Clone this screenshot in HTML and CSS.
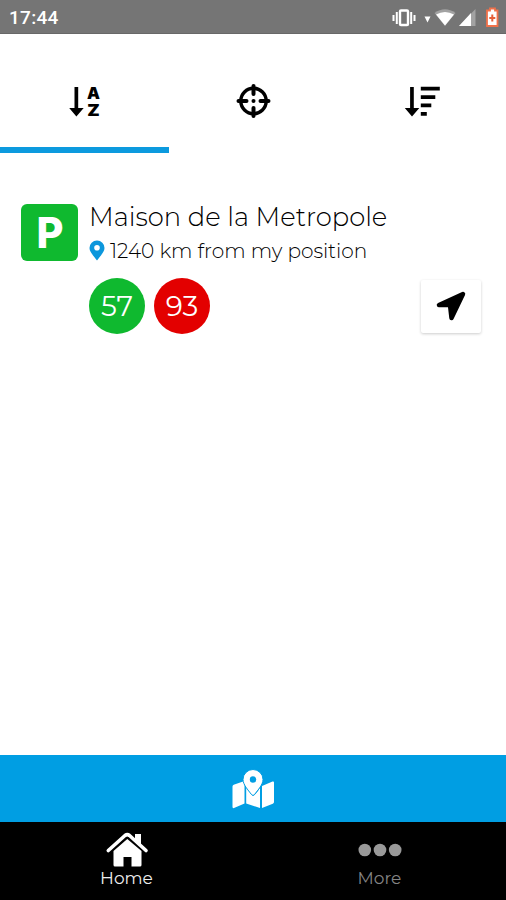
FILE: index.html
```html
<!DOCTYPE html>
<html lang="en">
<head>
<meta charset="utf-8">
<title>Parking</title>
<link rel="stylesheet" href="styles.css">
</head>
<body>
<div class="app">
  <header class="status">
    <span class="time">17:44</span>
    <svg class="status-icons" width="126" height="34" viewBox="380 0 126 34">
      <g fill="none" stroke="#fff" stroke-width="2">
        <rect x="400" y="10.500" width="8" height="14.500" rx="1" stroke-width="2.400"/>
        <path d="M396.800 12v12M411.200 12v12M393.500 15v6M414.500 15v6"/>
      </g>
      <path d="M424.500 16.500h6l-3 6z" fill="#fff"/>
      <path d="M434.500 13q10.500-7.500 21 0L445 26z" fill="#a2a2a2"/>
      <path d="M436 14.500q9-5 18 0L445 25.500z" fill="#fff"/>
      <path d="M475.500 9v17H459z" fill="#a2a2a2"/>
      <path d="M471 13v13h-12z" fill="#fff"/>
      <path d="M490 8.500h5v2h2.500v15.500h-10.500V10.500h3z" fill="#fff" stroke="#f0714a" stroke-width="1.800"/>
      <path d="M492.300 14.500v7M489.300 18h6" stroke="#e65f38" stroke-width="2"/>
    </svg>
  </header>
  <nav class="tabs">
    <div class="tab active">
      <svg width="60" height="50" viewBox="54.300 76 60 50">
        <path d="M74.800 87h3.700v21H84l-7.300 8.500L69.500 108h5.300z"/>
        <text class="sort-letter" x="93.800" y="99" textLength="13" lengthAdjust="spacingAndGlyphs">A</text>
        <text class="sort-letter" x="93.800" y="116" textLength="12.500" lengthAdjust="spacingAndGlyphs">Z</text>
      </svg>
    </div>
    <div class="tab">
      <svg width="60" height="50" viewBox="223 76 60 50">
        <circle cx="253.500" cy="101" r="12.700" fill="none" stroke="#000" stroke-width="3.400"/>
        <path d="M253.500 86v8M253.500 108v8M238.500 101h8M260.500 101h8" stroke="#000" stroke-width="4" stroke-linecap="round"/>
        <circle cx="253.500" cy="101" r="2"/>
      </svg>
    </div>
    <div class="tab">
      <svg width="60" height="50" viewBox="391.700 76 60 50">
        <path d="M409.800 87h3.700v21h5.500l-7.300 8.500-7.200-8.500h5.300z"/>
        <path d="M420.500 86.800h19v3.800h-19zM420.500 95.200H435V99h-14.500zM420.500 103.600H431v3.700h-10.500zM420.500 112h6v3.800h-6z"/>
      </svg>
    </div>
  </nav>
  <main class="list">
    <article class="place">
      <div class="badge"><svg width="57" height="57" viewBox="21 204 57 57"><text class="badge-letter" x="50" y="248" textLength="27" lengthAdjust="spacingAndGlyphs">P</text></svg></div>
      <div class="info">
        <h1 class="name">Maison de la Metropole</h1>
        <p class="distance">
          <svg width="16" height="21" viewBox="0 0 16 21"><path fill-rule="evenodd" d="M8 .5A7.400 7.400 0 0 0 .5 8c0 3.700 3.500 7.300 7.500 12.500C12 15.300 15.500 11.700 15.500 8A7.400 7.400 0 0 0 8 .5zM8 5a2.800 2.800 0 1 1 0 5.600A2.800 2.800 0 0 1 8 5z" fill="#0c97dc"/></svg>
          <span>1240 km from my position</span>
        </p>
        <div class="actions">
          <span class="count free">57</span>
          <span class="count taken">93</span>
          <button class="go" aria-label="Directions">
            <svg width="60" height="53" viewBox="420.500 280 60 53"><path d="M462.500 294 438.500 305H449.500L451 318z" stroke="#000" stroke-width="4.500" stroke-linejoin="round"/></svg>
          </button>
        </div>
      </div>
    </article>
  </main>
  <div class="map-bar">
    <svg width="60" height="60" viewBox="223.500 758.500 60 60" fill="#fff">
      <path d="M233 786q0-1.300 1.200-1.800L245 780.500V803l-10.500 4.500q-1.500.5-1.500-1zM262.500 785.500l10.500-4.500q1.500-.5 1.500 1v19.500q0 1.300-1.200 1.800l-10.800 4.200z"/>
      <path d="M246.700 786c2 4 4.500 7.500 6.800 9.500 2.500-1.500 4.500-4 7-8.500v20.500L246.700 803z"/>
      <path stroke="#009ee3" stroke-width="1" d="M253.500 769a10 10 0 0 0-10 10c0 5 5 10.500 8.500 15q1.500 2 3 0c3.500-4.500 8.500-10 8.500-15a10 10 0 0 0-10-10z"/>
      <circle cx="253.500" cy="779" r="3.200" fill="#009ee3"/>
    </svg>
  </div>
  <nav class="bottom">
    <div class="item selected">
      <svg width="50" height="39" viewBox="101.500 830 50 39" fill="#fff">
        <path d="M134.500 834h6v13l-6-6z"/>
        <path d="M107.800 850.500 124.500 835.500q2.300-1.700 4.500 0l16.500 15" fill="none" stroke="#fff" stroke-width="3.600" stroke-linecap="round" stroke-linejoin="round"/>
        <path d="M113 851l13.800-12L141 851v14q0 1.500-1.500 1.500H131V857h-8v9.500h-8.500q-1.500 0-1.500-1.500z"/>
      </svg>
      <span>Home</span>
    </div>
    <div class="item">
      <svg width="50" height="39" viewBox="355 830 50 39" fill="#999"><circle cx="364.800" cy="850" r="6.300"/><circle cx="380" cy="850" r="6.300"/><circle cx="395.200" cy="850" r="6.300"/></svg>
      <span>More</span>
    </div>
  </nav>
</div>
</body>
</html>
```

FILE: styles.css
```css
* { box-sizing: border-box; }
body { margin: 0; font-family: Montserrat, Inter, sans-serif; background: #fff; }
svg { display: block; flex: none; }
.app { display: flex; flex-direction: column; height: 900px; }
.status { display: flex; justify-content: space-between; align-items: center; height: 34px; padding-left: 9px; background: #757575; border-bottom: 1px solid #686868; }
.time { font: 500 19px/36px Roboto, sans-serif; color: #fff; letter-spacing: .3px; padding-top: 2px; }
.tabs { display: grid; grid-template-columns: repeat(3, 1fr); height: 119px; }
.tab { display: flex; justify-content: center; align-items: flex-start; padding-top: 42px; border-bottom: 6px solid transparent; }
.tab.active { border-color: #0c9ade; }
.sort-letter { font: 900 16.500px Inter, sans-serif; text-anchor: middle; }
.list { flex: 1; padding: 51px 25px 0 21px; }
.place { display: flex; gap: 11px; }
.badge { width: 57px; height: 57px; border-radius: 6px; background: #0fb92f; }
.badge-letter { font: 800 42px Inter, sans-serif; fill: #fff; text-anchor: middle; }
.info { flex: 1; }
.name { margin: 0; font-size: 25.800px; line-height: 26px; font-weight: 300; color: #000; white-space: nowrap; }
.distance { display: flex; align-items: center; gap: 5px; height: 21px; margin: 10px 0 0; font-size: 20.100px; font-weight: 300; color: #000; white-space: nowrap; }
.actions { display: flex; align-items: center; gap: 9px; margin-top: 17px; }
.count { width: 56px; height: 56px; border-radius: 50%; color: #fff; font-size: 28px; line-height: 56px; font-weight: 400; text-align: center; }
.free { background: #0fb92f; }
.taken { background: #e30000; }
.go { width: 60px; height: 53px; margin-left: auto; padding: 0; border: 0; border-radius: 2px; background: #fff; box-shadow: 0 1px 3px rgba(0, 0, 0, .2); }
.map-bar { display: flex; align-items: center; justify-content: center; height: 67px; background: #009ee3; }
.bottom { display: grid; grid-template-columns: 1fr 1fr; height: 78px; background: #000; }
.item { display: flex; flex-direction: column; align-items: center; padding-top: 8px; color: #858585; font-size: 17px; line-height: 18px; }
.item.selected { color: #eee; }
```
